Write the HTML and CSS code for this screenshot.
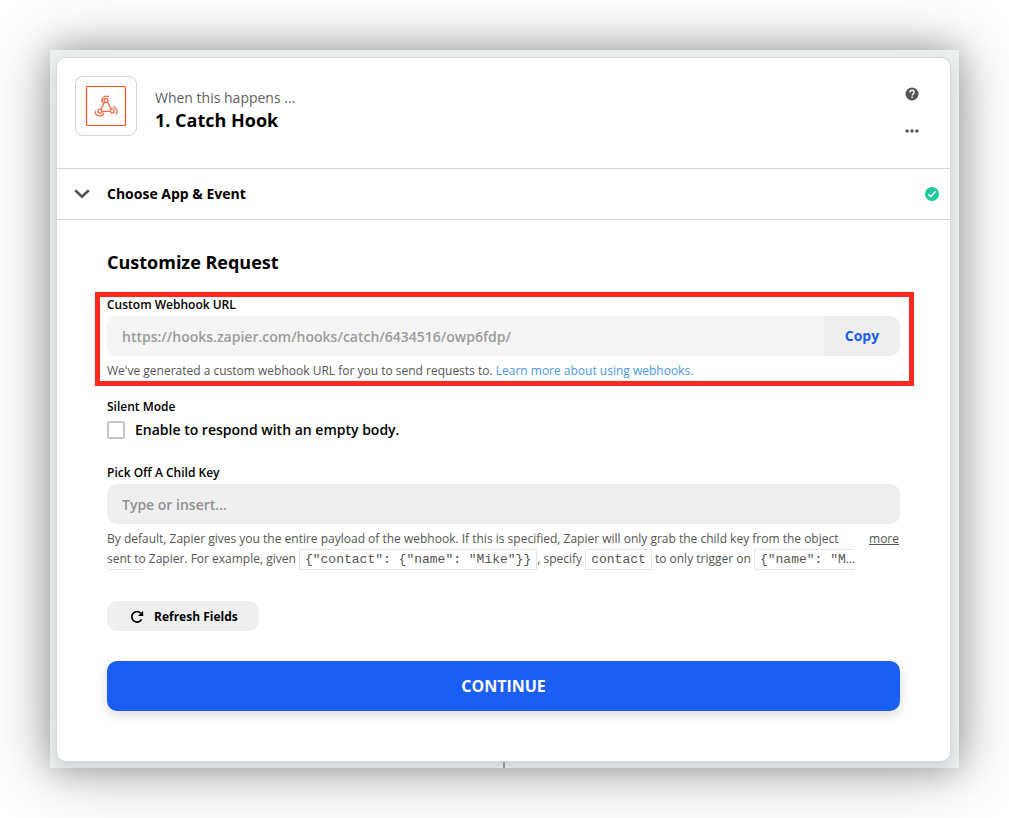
FILE: index.html
```html
<!DOCTYPE html>
<html lang="en">
<head>
<meta charset="utf-8">
<title>Catch Hook</title>
<link rel="stylesheet" href="styles.css">
</head>
<body>
<main class="page">
<div class="shadow">
<div class="frame">
  <section class="card">
    <header class="head">
      <div class="app-icon">
        <svg width="42" height="42" viewBox="0 0 42 42" fill="none" stroke="#ff4f1f">
          <rect x="1.5" y="1.5" width="39" height="39" rx="1" stroke-width="1.2"/>
          <g stroke="#f96b50" stroke-width="1.3" stroke-linecap="round">
            <circle cx="21" cy="15.4" r="1.9"/>
            <circle cx="14.9" cy="26" r="1.9"/>
            <circle cx="27.2" cy="26" r="1.9"/>
            <path d="M17.6 18A4.5 4.5 0 0 1 23.4 11.6M19.4 17.6L16.1 23.6M22.6 17.1L26 23.6M17.4 26.3H24.8"/>
            <path d="M10.2 26.4A4.5 4.5 0 0 0 18.9 28M28.6 21.8A4.5 4.5 0 0 1 31 29"/>
          </g>
        </svg>
      </div>
      <div class="head-text">
        <p class="kicker">When this happens ...</p>
        <h1 class="title">1. Catch Hook</h1>
      </div>
      <div class="head-actions">
        <button class="icon-button" type="button" aria-label="Help">
          <svg width="14" height="14" viewBox="0 0 14 14"><circle cx="7" cy="7" r="6.5" fill="#555"/><path d="M4.9 5.5C4.9 4.1 5.8 3.3 7.1 3.3S9.2 4.1 9.2 5.3C9.2 6.7 7.2 6.8 7.2 8.5" fill="none" stroke="#fff" stroke-width="1.4"/><rect x="6.4" y="9.4" width="1.5" height="1.5" fill="#fff"/></svg>
        </button>
        <button class="icon-button" type="button" aria-label="More options">
          <svg width="14" height="14" viewBox="0 0 14 14" fill="#555"><circle cx="2.1" cy="7" r="1.7"/><circle cx="7" cy="7" r="1.7"/><circle cx="11.9" cy="7" r="1.7"/></svg>
        </button>
      </div>
    </header>
    <button class="step" type="button">
      <svg width="16" height="10" viewBox="0 0 16 10" fill="none" stroke="#555" stroke-width="2.6"><path d="M1.2 1.2L8 7.6L14.8 1.2"/></svg>
      <span class="step-name">Choose App &amp; Event</span>
      <svg width="14" height="14" viewBox="0 0 14 14"><circle cx="7" cy="7" r="7" fill="#1fcb9f"/><path d="M3.3 7.2L5.8 9.6L10.8 4.3" fill="none" stroke="#fff" stroke-width="1.4"/></svg>
    </button>
    <form class="body">
      <h2 class="title">Customize Request</h2>
      <div class="field highlighted">
        <label class="label" for="url">Custom Webhook URL</label>
        <div class="copy-row">
          <input class="input" id="url" type="text" readonly value="https://hooks.zapier.com/hooks/catch/6434516/owp6fdp/">
          <button class="copy" type="button">Copy</button>
        </div>
        <p class="help">We've generated a custom webhook URL for you to send requests to. <a class="link" href="#">Learn more about using webhooks.</a></p>
      </div>
      <fieldset class="silent">
        <legend class="label">Silent Mode</legend>
        <label class="check-row"><input class="check" type="checkbox">Enable to respond with an empty body.</label>
      </fieldset>
      <div class="field">
        <label class="label" for="key">Pick Off A Child Key</label>
        <input class="input" id="key" type="text" placeholder="Type or insert...">
        <div class="help-row">
          <p class="help clamped">By default, Zapier gives you the entire payload of the webhook. If this is specified, Zapier will only grab the child key from the object sent to Zapier. For example, given <code class="code">{"contact": {"name": "Mike"}}</code>, specify <code class="code">contact</code> to only trigger on <code class="code">{"name": "Mike"}</code></p>
          <a class="help more" href="#">more</a>
        </div>
      </div>
      <button class="refresh" type="button">
        <svg width="14" height="14" viewBox="0 0 14 14"><path d="M11.6 9.3A5.2 5.2 0 1 1 10.9 3.4" fill="none" stroke="#000" stroke-width="1.7"/><path d="M13.2 .8V6H8z"/></svg>
        Refresh Fields
      </button>
      <button class="continue" type="submit">CONTINUE</button>
    </form>
  </section>
  <div class="connector"></div>
</div>
</div>
</main>
</body>
</html>
```
FILE: styles.css
```css
* {
  box-sizing: border-box;
}

body {
  margin: 0;
  background: #fff;
  color: #000;
  font-family: "Open Sans", "Noto Sans", sans-serif;
  font-size: 14px;
  line-height: 20px;
}

h1, h2, p, fieldset, legend {
  margin: 0;
  padding: 0;
  border: 0;
}

button, input {
  margin: 0;
  border: 0;
  font: inherit;
  color: inherit;
}

button {
  cursor: pointer;
}

svg {
  display: block;
  flex: none;
}

.page {
  padding: 50px;
  overflow: hidden;
}

.shadow {
  box-shadow: 0 0 30px rgba(0, 0, 0, 0.25), 0 2px 60px rgba(0, 0, 0, 0.3);
}

.frame {
  padding: 7px 8px 0 6px;
  background: #ebeff0;
  overflow: hidden;
}

.card {
  border: 1px solid #d3d8db;
  border-radius: 10px;
  background: #fff;
  box-shadow: 0 6px 15px rgba(0, 0, 0, 0.12);
}

.head {
  display: flex;
  gap: 18px;
  height: 111px;
  padding: 18px 23px 18px 18px;
  border-bottom: 1px solid #d3d8db;
}

.app-icon {
  display: flex;
  align-items: center;
  justify-content: center;
  width: 62px;
  height: 60px;
  border: 1px solid #d4d4d4;
  border-radius: 8px;
}

.head-text {
  flex: 1;
  padding-top: 12px;
}

.kicker {
  color: #5f5f5f;
}

.title {
  font-size: 18px;
  font-weight: 700;
  line-height: 24px;
}

.head-actions {
  display: flex;
  flex-direction: column;
  gap: 7px;
  padding-top: 3px;
}

.icon-button {
  display: flex;
  align-items: center;
  justify-content: center;
  width: 30px;
  height: 30px;
  padding: 0;
  background: none;
}

.step {
  display: flex;
  align-items: center;
  gap: 17px;
  width: 100%;
  height: 51px;
  padding: 0 11px 0 17px;
  border-bottom: 1px solid #d3d8db;
  background: none;
  font-weight: 700;
  text-align: left;
}

.step-name {
  flex: 1;
}

.body {
  display: flex;
  flex-direction: column;
  padding: 30px 50px 50px;
}

.field {
  display: flex;
  flex-direction: column;
}

.highlighted {
  position: relative;
  margin: 22px 0 17px;
}

.highlighted::after {
  content: "";
  position: absolute;
  inset: -4px -14px -5px -12px;
  border: 5px solid #ff291d;
  pointer-events: none;
}

.label {
  margin-bottom: 2px;
  font-size: 12px;
  font-weight: 600;
  line-height: 18px;
}

.copy-row {
  display: flex;
  border-radius: 10px;
  overflow: hidden;
}

.input {
  width: 100%;
  height: 40px;
  padding: 0 15px;
  border-radius: 10px;
  background: #efefef;
  font-weight: 600;
}

.copy-row .input {
  flex: 1;
  min-width: 0;
  border-radius: 0;
  background: #f5f5f5;
  color: #9b9b9b;
}

.input::placeholder {
  color: #919191;
  opacity: 1;
}

.copy {
  width: 76px;
  background: #efefef;
  color: #1b5ef3;
  font-weight: 700;
}

.help {
  margin-top: 5px;
  color: #555;
  font-size: 12px;
}

.link {
  color: #4a98ea;
  text-decoration: none;
}

.silent {
  margin-bottom: 24px;
}

.check-row {
  display: flex;
  align-items: center;
  gap: 10px;
  margin-top: 2px;
  font-weight: 600;
}

.check {
  appearance: none;
  width: 18px;
  height: 18px;
  border: 2px solid #c4c4c4;
  border-radius: 3px;
  background: #fff;
}

.help-row {
  display: flex;
  justify-content: space-between;
  gap: 13px;
}

.clamped {
  display: -webkit-box;
  flex: 1;
  padding-bottom: 1px;
  overflow: hidden;
  -webkit-box-orient: vertical;
  -webkit-line-clamp: 2;
}

.code {
  padding: 2px 5px;
  border: 1px solid #e6e6e6;
  font-family: "Liberation Mono", monospace;
  font-size: 13px;
  line-height: 16px;
  word-break: break-all;
}

.more {
  padding-right: 1px;
}

.refresh {
  display: flex;
  align-items: center;
  align-self: flex-start;
  gap: 10px;
  height: 30px;
  margin: 31px 0 30px;
  padding: 1px 21px 0 23px;
  border-radius: 10px;
  background: #efefef;
  font-size: 12px;
  font-weight: 700;
}

.continue {
  height: 50px;
  border-radius: 10px;
  background: #1b5ef3;
  box-shadow: 0 4px 12px rgba(0, 0, 0, 0.15);
  color: #fff;
  font-size: 16px;
  font-weight: 700;
}

.connector {
  width: 2px;
  height: 6px;
  margin: 0 auto;
  background: #8b9498;
}
```
